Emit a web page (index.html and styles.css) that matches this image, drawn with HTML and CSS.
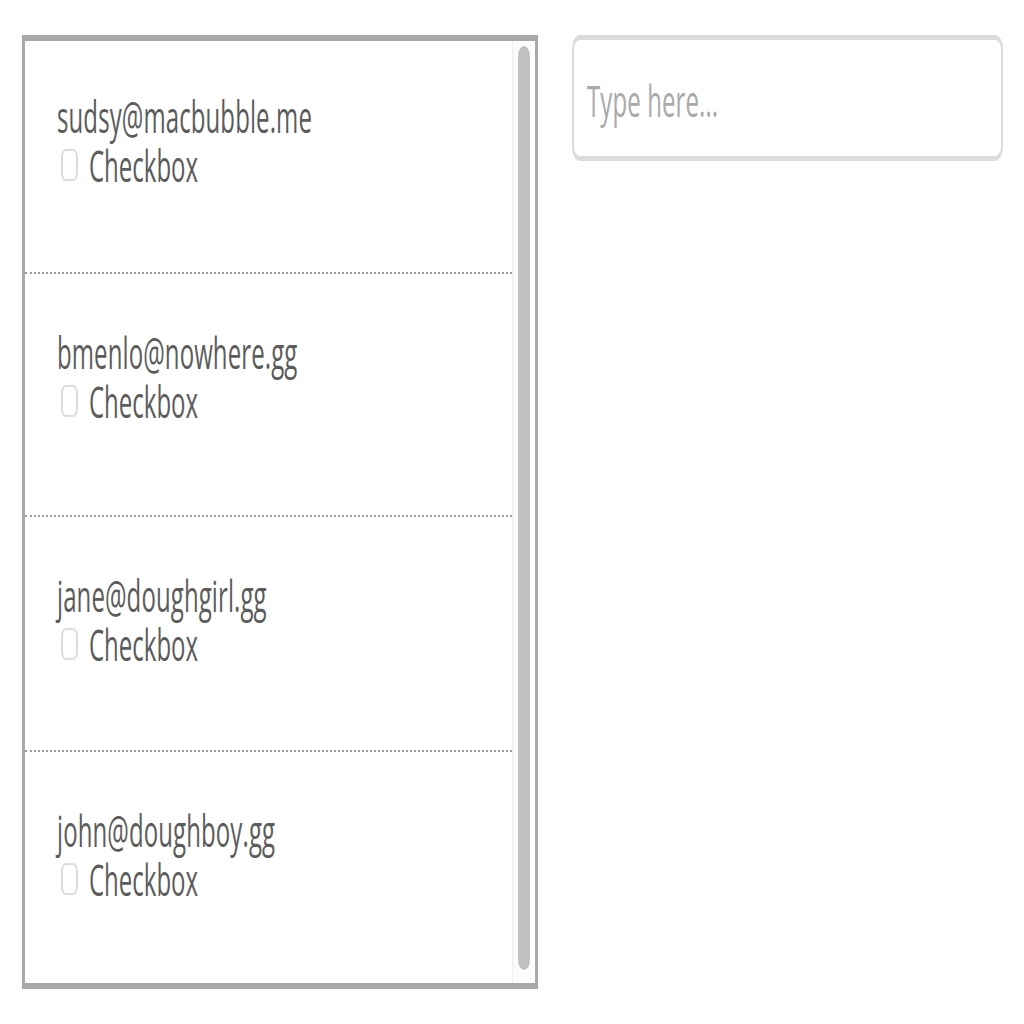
FILE: index.html
```html
<!DOCTYPE html>
<html lang="en">
<head>
<meta charset="utf-8">
<title>Contacts</title>
<link rel="stylesheet" href="styles.css">
</head>
<body>
<div class="page">
  <div class="list">
    <div class="items">
      <div class="item">
        <div class="row"><span class="txt email">sudsy@macbubble.me</span></div>
        <label class="row"><span class="box"></span><span class="txt">Checkbox</span></label>
      </div>
      <div class="item">
        <div class="row"><span class="txt email">bmenlo@nowhere.gg</span></div>
        <label class="row"><span class="box"></span><span class="txt">Checkbox</span></label>
      </div>
      <div class="item">
        <div class="row"><span class="txt email">jane@doughgirl.gg</span></div>
        <label class="row"><span class="box"></span><span class="txt">Checkbox</span></label>
      </div>
      <div class="item">
        <div class="row"><span class="txt email">john@doughboy.gg</span></div>
        <label class="row"><span class="box"></span><span class="txt">Checkbox</span></label>
      </div>
    </div>
    <div class="track"><div class="thumb"></div></div>
  </div>
  <div class="input"><span class="txt placeholder">Type here...</span></div>
</div>
</body>
</html>
```
FILE: styles.css
```css
html, body {
  margin: 0;
  background: #ffffff;
}
body {
  font-family: "Open Sans", "Noto Sans", sans-serif;
  color: #5c5c5c;
}
.page {
  display: flex;
  align-items: flex-start;
  gap: 34px;
  padding: 35px 21px 0 22px;
}
.list {
  box-sizing: border-box;
  width: 516px;
  height: 954px;
  display: flex;
  border: 3px solid #a9a9a9;
  border-top-width: 6px;
  border-bottom-width: 6px;
}
.items {
  flex: 1;
  display: flex;
  flex-direction: column;
}
.item {
  flex: 0 0 235px;
  box-sizing: border-box;
  padding: 53px 0 0 32px;
}
.item:first-child {
  flex-basis: 231px;
  padding-top: 50px;
}
.item:nth-child(2) {
  flex-basis: 243px;
}
.item:last-child {
  flex: 1 1 auto;
}
.item + .item {
  border-top: 2px dotted #9a9a9a;
}
.row {
  height: 49px;
  display: flex;
  align-items: center;
}
.txt {
  display: inline-block;
  font-size: 24px;
  line-height: 24px;
  letter-spacing: 0.1px;
  transform: scaleY(1.85);
  white-space: nowrap;
}
.email {
  color: #5c5c5c;
}
.box {
  box-sizing: border-box;
  width: 17px;
  height: 32px;
  margin: 0 11px 0 4px;
  border: 2px solid #dddddd;
  border-radius: 5px / 8px;
  background: #ffffff;
}
.row .box + .txt {
  letter-spacing: 0;
}
.track {
  width: 23px;
  box-sizing: border-box;
  border-left: 1px solid #eeeeee;
  background: #fcfcfc;
  padding: 5px 5px 13px 5px;
  display: flex;
}
.thumb {
  flex: 1;
  background: #c1c1c1;
  border-radius: 6px / 10px;
}
.input {
  box-sizing: border-box;
  width: 431px;
  height: 126px;
  border: 2px solid #dcdcdc;
  border-top-width: 5px;
  border-bottom-width: 5px;
  border-radius: 8px / 14px;
  padding: 0 0 0 13px;
  display: flex;
  align-items: center;
}
.placeholder {
  color: #aaaaaa;
  margin-top: 4px;
}
```
